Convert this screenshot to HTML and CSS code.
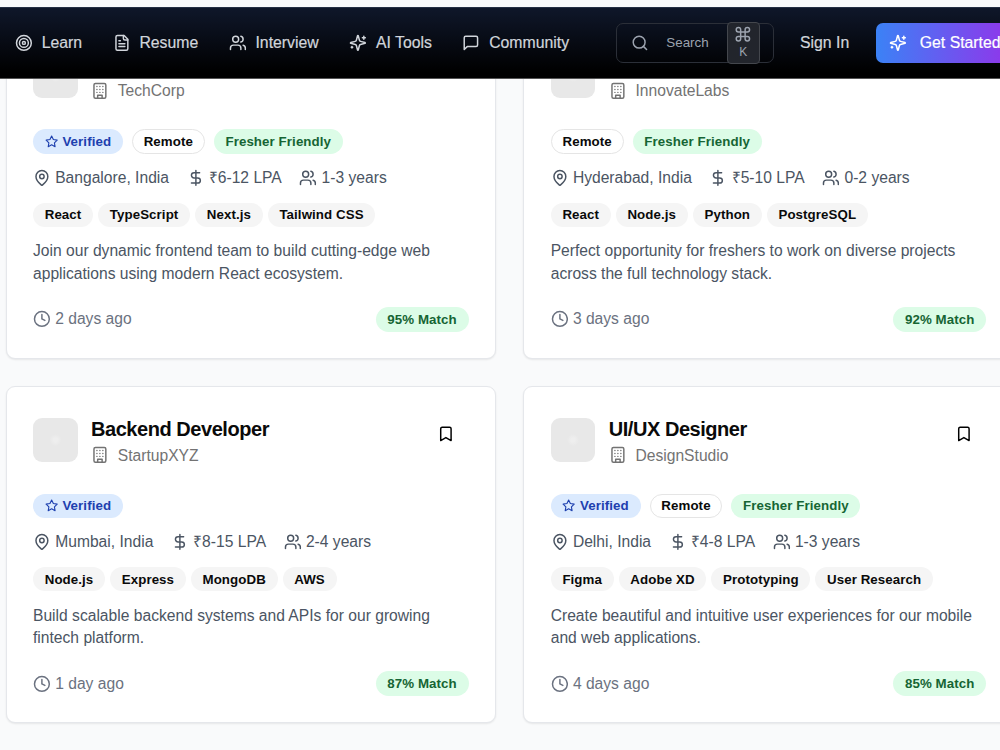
FILE: index.html
```html
<!DOCTYPE html>
<html lang="en">

<head>
    <meta charset="UTF-8">
    <meta name="viewport" content="width=device-width, initial-scale=1.0">
    <title>Jobs</title>
    <link rel="stylesheet" href="styles.css">
</head>

<body>
    <!-- icon set -->
    <svg class="sprite" xmlns="http://www.w3.org/2000/svg">
        <symbol id="target" viewBox="0 0 24 24"><circle cx="12" cy="12" r="10"/><circle cx="12" cy="12" r="6"/><circle cx="12" cy="12" r="2"/></symbol>
        <symbol id="file" viewBox="0 0 24 24"><path d="M15 2H6a2 2 0 0 0-2 2v16a2 2 0 0 0 2 2h12a2 2 0 0 0 2-2V7Z"/><path d="M14 2v4a2 2 0 0 0 2 2h4M10 9H8M16 13H8M16 17H8"/></symbol>
        <symbol id="sparkles" viewBox="0 0 24 24"><path d="M9.937 15.5A2 2 0 0 0 8.5 14.063l-6.135-1.582a.5.5 0 0 1 0-.962L8.5 9.936A2 2 0 0 0 9.937 8.5l1.582-6.135a.5.5 0 0 1 .963 0L14.063 8.5A2 2 0 0 0 15.5 9.937l6.135 1.581a.5.5 0 0 1 0 .964L15.5 14.063a2 2 0 0 0-1.437 1.437l-1.582 6.135a.5.5 0 0 1-.963 0z"/><path d="M20 3v4M22 5h-4M4 17v2M5 18H3"/></symbol>
        <symbol id="message" viewBox="0 0 24 24"><path d="M21 15a2 2 0 0 1-2 2H7l-4 4V5a2 2 0 0 1 2-2h14a2 2 0 0 1 2 2z"/></symbol>
        <symbol id="search" viewBox="0 0 24 24"><circle cx="11" cy="11" r="8"/><path d="m21 21-4.3-4.3"/></symbol>
        <symbol id="command" viewBox="0 0 24 24"><path d="M15 6v12a3 3 0 1 0 3-3H6a3 3 0 1 0 3 3V6a3 3 0 1 0-3 3h12a3 3 0 1 0-3-3"/></symbol>
        <symbol id="building" viewBox="0 0 24 24"><rect x="4" y="2" width="16" height="20" rx="2"/><path d="M9 22v-4h6v4M8 6h.01M16 6h.01M12 6h.01M12 10h.01M12 14h.01M16 10h.01M16 14h.01M8 10h.01M8 14h.01"/></symbol>
        <symbol id="star" viewBox="0 0 24 24"><path d="m12 2 3.09 6.26L22 9.27l-5 4.87 1.18 6.88L12 17.77l-6.18 3.25L7 14.14 2 9.27l6.91-1.01z"/></symbol>
        <symbol id="pin" viewBox="0 0 24 24"><path d="M20 10c0 4.993-5.539 10.193-7.399 11.799a1 1 0 0 1-1.202 0C9.539 20.193 4 14.993 4 10a8 8 0 0 1 16 0"/><circle cx="12" cy="10" r="3"/></symbol>
        <symbol id="dollar" viewBox="0 0 24 24"><path d="M12 2v20M17 5H9.5a3.5 3.5 0 0 0 0 7h5a3.5 3.5 0 0 1 0 7H6"/></symbol>
        <symbol id="team" viewBox="0 0 24 24"><path d="M16 21v-2a4 4 0 0 0-4-4H6a4 4 0 0 0-4 4v2"/><circle cx="9" cy="7" r="4"/><path d="M22 21v-2a4 4 0 0 0-3-3.87M16 3.13a4 4 0 0 1 0 7.75"/></symbol>
        <symbol id="clock" viewBox="0 0 24 24"><circle cx="12" cy="12" r="10"/><path d="M12 6v6l4 2"/></symbol>
        <symbol id="bookmark" viewBox="0 0 24 24"><path d="m19 21-7-4-7 4V5a2 2 0 0 1 2-2h10a2 2 0 0 1 2 2v16z"/></symbol>
    </svg>

    <header class="navbar">
        <nav class="nav-links">
            <a class="nav-link"><svg class="icon"><use href="#target"/></svg>Learn</a>
            <a class="nav-link"><svg class="icon"><use href="#file"/></svg>Resume</a>
            <a class="nav-link"><svg class="icon"><use href="#team"/></svg>Interview</a>
            <a class="nav-link"><svg class="icon"><use href="#sparkles"/></svg>AI Tools</a>
            <a class="nav-link"><svg class="icon"><use href="#message"/></svg>Community</a>
        </nav>
        <button class="search-btn">
            <svg class="icon"><use href="#search"/></svg>
            <span class="search-text">Search</span>
            <kbd class="kbd"><svg class="icon"><use href="#command"/></svg>K</kbd>
        </button>
        <a class="sign-in">Sign In</a>
        <a class="get-started"><svg class="icon"><use href="#sparkles"/></svg>Get Started</a>
    </header>

    <main class="jobs">
        <article class="card">
            <div class="card-head">
                <div class="logo"></div>
                <div class="role">
                    <p class="company"><svg class="icon"><use href="#building"/></svg>TechCorp</p>
                </div>
            </div>
            <div class="badges">
                <span class="badge verified"><svg class="icon"><use href="#star"/></svg>Verified</span>
                <span class="badge remote">Remote</span>
                <span class="badge green">Fresher Friendly</span>
            </div>
            <div class="info">
                <span><svg class="icon"><use href="#pin"/></svg>Bangalore, India</span>
                <span><svg class="icon"><use href="#dollar"/></svg>₹6-12 LPA</span>
                <span><svg class="icon"><use href="#team"/></svg>1-3 years</span>
            </div>
            <div class="skills">
                <span class="badge">React</span>
                <span class="badge">TypeScript</span>
                <span class="badge">Next.js</span>
                <span class="badge">Tailwind CSS</span>
            </div>
            <p class="desc">Join our dynamic frontend team to build cutting-edge web<br>applications using modern React ecosystem.</p>
            <div class="card-foot">
                <span class="posted"><svg class="icon"><use href="#clock"/></svg>2 days ago</span>
                <span class="badge green">95% Match</span>
            </div>
        </article>

        <article class="card">
            <div class="card-head">
                <div class="logo"></div>
                <div class="role">
                    <p class="company"><svg class="icon"><use href="#building"/></svg>InnovateLabs</p>
                </div>
            </div>
            <div class="badges">
                <span class="badge remote">Remote</span>
                <span class="badge green">Fresher Friendly</span>
            </div>
            <div class="info">
                <span><svg class="icon"><use href="#pin"/></svg>Hyderabad, India</span>
                <span><svg class="icon"><use href="#dollar"/></svg>₹5-10 LPA</span>
                <span><svg class="icon"><use href="#team"/></svg>0-2 years</span>
            </div>
            <div class="skills">
                <span class="badge">React</span>
                <span class="badge">Node.js</span>
                <span class="badge">Python</span>
                <span class="badge">PostgreSQL</span>
            </div>
            <p class="desc">Perfect opportunity for freshers to work on diverse projects<br>across the full technology stack.</p>
            <div class="card-foot">
                <span class="posted"><svg class="icon"><use href="#clock"/></svg>3 days ago</span>
                <span class="badge green">92% Match</span>
            </div>
        </article>

        <article class="card">
            <div class="card-head">
                <div class="logo"></div>
                <div class="role">
                    <h3 class="title">Backend Developer</h3>
                    <p class="company"><svg class="icon"><use href="#building"/></svg>StartupXYZ</p>
                </div>
                <button class="save"><svg class="icon"><use href="#bookmark"/></svg></button>
            </div>
            <div class="badges">
                <span class="badge verified"><svg class="icon"><use href="#star"/></svg>Verified</span>
            </div>
            <div class="info">
                <span><svg class="icon"><use href="#pin"/></svg>Mumbai, India</span>
                <span><svg class="icon"><use href="#dollar"/></svg>₹8-15 LPA</span>
                <span><svg class="icon"><use href="#team"/></svg>2-4 years</span>
            </div>
            <div class="skills">
                <span class="badge">Node.js</span>
                <span class="badge">Express</span>
                <span class="badge">MongoDB</span>
                <span class="badge">AWS</span>
            </div>
            <p class="desc">Build scalable backend systems and APIs for our growing<br>fintech platform.</p>
            <div class="card-foot">
                <span class="posted"><svg class="icon"><use href="#clock"/></svg>1 day ago</span>
                <span class="badge green">87% Match</span>
            </div>
        </article>

        <article class="card">
            <div class="card-head">
                <div class="logo"></div>
                <div class="role">
                    <h3 class="title">UI/UX Designer</h3>
                    <p class="company"><svg class="icon"><use href="#building"/></svg>DesignStudio</p>
                </div>
                <button class="save"><svg class="icon"><use href="#bookmark"/></svg></button>
            </div>
            <div class="badges">
                <span class="badge verified"><svg class="icon"><use href="#star"/></svg>Verified</span>
                <span class="badge remote">Remote</span>
                <span class="badge green">Fresher Friendly</span>
            </div>
            <div class="info">
                <span><svg class="icon"><use href="#pin"/></svg>Delhi, India</span>
                <span><svg class="icon"><use href="#dollar"/></svg>₹4-8 LPA</span>
                <span><svg class="icon"><use href="#team"/></svg>1-3 years</span>
            </div>
            <div class="skills">
                <span class="badge">Figma</span>
                <span class="badge">Adobe XD</span>
                <span class="badge">Prototyping</span>
                <span class="badge">User Research</span>
            </div>
            <p class="desc">Create beautiful and intuitive user experiences for our mobile<br>and web applications.</p>
            <div class="card-foot">
                <span class="posted"><svg class="icon"><use href="#clock"/></svg>4 days ago</span>
                <span class="badge green">85% Match</span>
            </div>
        </article>
    </main>
</body>

</html>
```
FILE: styles.css
```css
* {
    margin: 0;
    padding: 0;
    box-sizing: border-box;
}

body {
    height: 750px;
    overflow: hidden;
    background: #f9fafb;
    font-family: "Liberation Sans", Arial, sans-serif;
    font-size: 15.64px;
    color: #0a0a0a;
}

button {
    font: inherit;
    background: none;
    border: none;
}

.sprite {
    display: none;
}

.icon {
    width: 17.8px;
    height: 17.8px;
    flex-shrink: 0;
    fill: none;
    stroke: currentColor;
    stroke-width: 2;
    stroke-linecap: round;
    stroke-linejoin: round;
}

/* navbar stays above the job list */
.navbar {
    position: fixed;
    top: 7px;
    left: 0;
    z-index: 10;
    width: 1014px;
    height: 72px;
    padding-left: 15px;
    display: flex;
    align-items: center;
    background: linear-gradient(#0f172a, #000 92%);
    border-top: 1px solid #253044;
    border-bottom: 1px solid #555;
    color: #d1d5db;
    font-size: 15.8px;
    -webkit-text-stroke: 0.2px currentColor;
}

.nav-links {
    display: flex;
    gap: 30.6px;
    width: 601px;
}

.nav-link {
    display: flex;
    align-items: center;
    gap: 8.9px;
}

.search-btn {
    display: flex;
    align-items: center;
    width: 158px;
    height: 40px;
    padding-left: 13.5px;
    border: 1px solid #2b2f38;
    border-radius: 7px;
    color: #9ca3af;
    font-size: 13.4px;
    -webkit-text-stroke: 0;
}

.search-text {
    margin: -1px 18px 0;
}

.kbd {
    display: flex;
    flex-direction: column;
    align-items: center;
    width: 33px;
    height: 42px;
    padding-top: 2px;
    gap: 1px;
    background: #22252c;
    border: 1px solid #44474d;
    border-radius: 4px;
    font-family: inherit;
    font-size: 12px;
}

.kbd .icon {
    height: 18.5px;
}

.sign-in {
    width: 102px;
    padding-left: 26px;
}

.get-started {
    display: flex;
    align-items: center;
    gap: 13px;
    width: 138px;
    height: 40px;
    padding-left: 13px;
    border-radius: 7px;
    background: linear-gradient(90deg, #3b82f6, #9333ea);
    color: #fff;
    white-space: nowrap;
}

.jobs {
    display: grid;
    grid-template-columns: 490.5px 490.5px;
    gap: 27.5px 27.2px;
    padding: 21.9px 0 0 5.5px;
}

.card {
    height: 336.8px;
    padding: 27px 26.5px;
    background: #fff;
    border: 1px solid #e5e7eb;
    border-radius: 9px;
    box-shadow: 0 1px 2px rgba(0, 0, 0, 0.08);
}

.card-head {
    display: flex;
    align-items: center;
    height: 52px;
    margin-bottom: 27.5px;
}

.logo {
    width: 44.5px;
    height: 44.5px;
    margin-right: 13.5px;
    border-radius: 9px;
    background: radial-gradient(circle, #eee 2px, #e8e8e8 6px);
}

.role {
    display: flex;
    flex-direction: column;
    justify-content: flex-end;
    flex: 1;
    height: 53px;
}

.title {
    font-size: 20px;
    line-height: 29px;
    letter-spacing: -0.45px;
}

.company {
    display: flex;
    align-items: center;
    gap: 9px;
    line-height: 23px;
    color: #737373;
}

.save {
    display: flex;
    margin: 0 13.5px 12px 0;
}

.badges,
.skills {
    display: flex;
    gap: 9px;
}

.skills {
    gap: 5px;
}

.badge {
    display: flex;
    align-items: center;
    gap: 4.4px;
    height: 24.4px;
    padding: 0 11.7px;
    border-radius: 13px;
    background: #f5f5f5;
    font-size: 13.3px;
    font-weight: bold;
    letter-spacing: 0.09px;
}

.verified {
    background: #dbeafe;
    color: #1e40af;
}

.verified .icon {
    width: 13.3px;
    height: 13.3px;
}

.remote {
    padding: 0 10.8px;
    background: #fff;
    border: 1px solid #e5e5e5;
}

.green {
    background: #dcfce7;
    color: #166534;
}

.info {
    display: flex;
    gap: 17.6px;
    margin: 13px 0 14px;
    line-height: 22px;
    color: #4b5563;
}

.info span,
.posted {
    display: flex;
    align-items: center;
    gap: 4.4px;
}

.desc {
    margin: 13.2px 0 22.2px;
    line-height: 22.3px;
    color: #4b5563;
}

.card-foot {
    display: flex;
    justify-content: space-between;
}

.posted {
    color: #6b7280;
}
```
